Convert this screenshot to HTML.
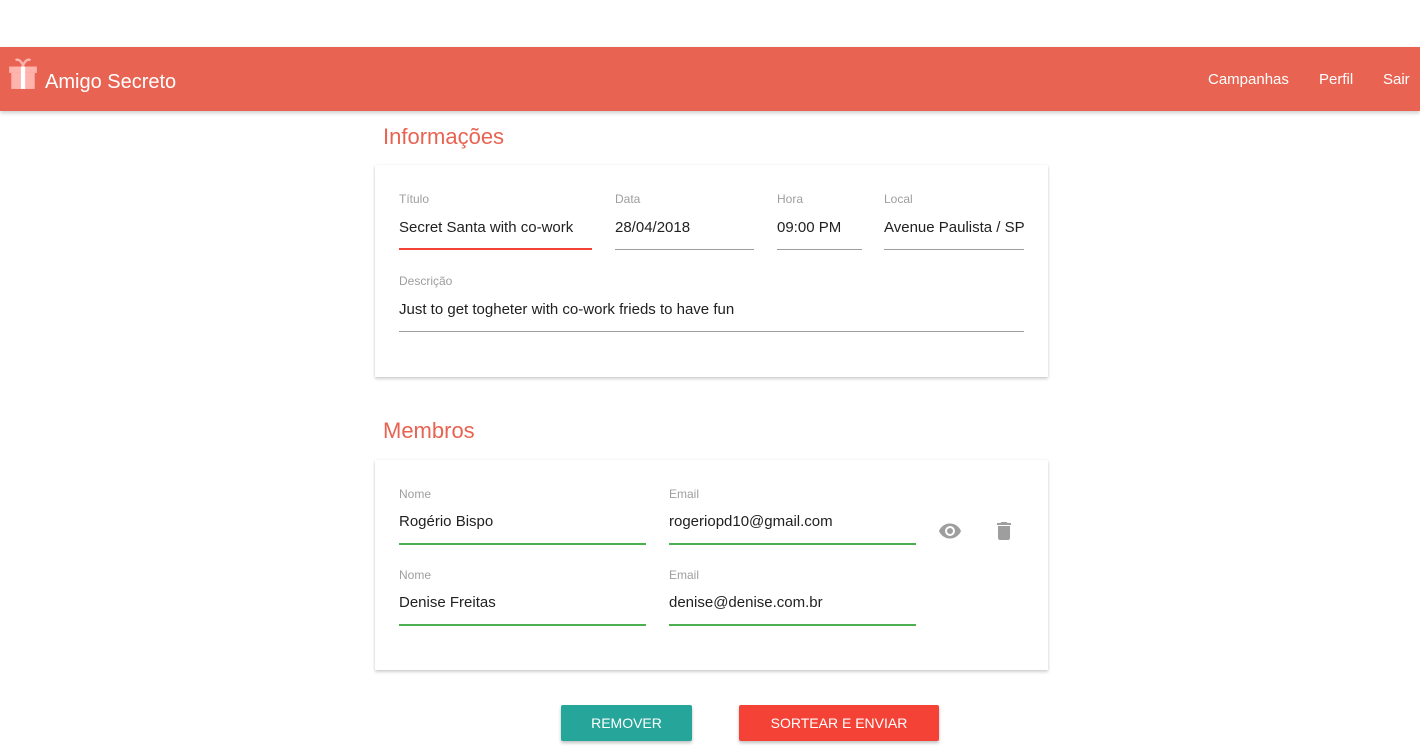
<!DOCTYPE html>
<html><head><meta charset="utf-8"><style>
*{margin:0;padding:0;box-sizing:border-box}
body{width:1420px;height:756px;background:#fff;font-family:"Liberation Sans",sans-serif;position:relative;overflow:hidden}
.a{position:absolute;white-space:nowrap}
.hdr{position:absolute;left:0;top:47px;width:1420px;height:64px;background:#e86351;box-shadow:0 2px 4px rgba(0,0,0,.2)}
.card{position:absolute;left:375px;width:673px;background:#fff;box-shadow:0 2px 3px rgba(0,0,0,.18),0 0 2px rgba(0,0,0,.08)}
.t{color:#e86351;font-size:22px}
.lb{font-size:12px;color:#9e9e9e}
.v{font-size:15px;color:#212121}
.ln{position:absolute;height:1px;background:#9e9e9e}
.btn{position:absolute;top:705px;height:36px;color:#fff;font-size:14px;text-align:center;line-height:36px;border-radius:2px;box-shadow:0 2px 3px rgba(0,0,0,.25)}
</style></head><body>
<div class="hdr">
<svg class="a" style="left:8px;top:11px" width="30" height="32" viewBox="0 0 28 30"><path d="M7 2c4-2 7 4 7 6M21 2c-4-2-7 4-7 6" stroke="#ffb3ad" stroke-width="2.2" fill="none"/><rect x="1" y="8" width="26" height="6" fill="#ffb3ad"/><rect x="3" y="14" width="22" height="15" fill="#ffb3ad"/><rect x="12" y="8" width="4" height="21" fill="#fff"/></svg>
<div class="a" style="left:45px;top:24px;font-size:20px;color:#fff">Amigo Secreto</div>
<div class="a" style="left:1208px;top:24px;font-size:15px;color:#fff">Campanhas</div>
<div class="a" style="left:1319px;top:24px;font-size:15px;color:#fff">Perfil</div>
<div class="a" style="left:1383px;top:24px;font-size:15px;color:#fff">Sair</div>
</div>
<div class="a t" style="left:383px;top:124px">Informações</div>
<div class="card" style="top:165px;height:212px"></div>
<div class="a lb" style="left:399px;top:192px">Título</div>
<div class="a v" style="left:399px;top:219px">Secret Santa with co-work</div>
<div class="ln" style="left:399px;top:248px;width:193px;height:2px;background:#f44336"></div>
<div class="a lb" style="left:615px;top:192px">Data</div>
<div class="a v" style="left:615px;top:219px">28/04/2018</div>
<div class="ln" style="left:615px;top:249px;width:139px"></div>
<div class="a lb" style="left:777px;top:192px">Hora</div>
<div class="a v" style="left:777px;top:219px">09:00 PM</div>
<div class="ln" style="left:777px;top:249px;width:85px"></div>
<div class="a lb" style="left:884px;top:192px">Local</div>
<div class="a v" style="left:884px;top:219px">Avenue Paulista / SP</div>
<div class="ln" style="left:884px;top:249px;width:140px"></div>
<div class="a lb" style="left:399px;top:274px">Descrição</div>
<div class="a v" style="left:399px;top:301px">Just to get togheter with co-work frieds to have fun</div>
<div class="ln" style="left:399px;top:331px;width:625px"></div>

<div class="a t" style="left:383px;top:418px">Membros</div>
<div class="card" style="top:460px;height:210px"></div>
<div class="a lb" style="left:399px;top:487px">Nome</div>
<div class="a v" style="left:399px;top:513px">Rogério Bispo</div>
<div class="ln" style="left:399px;top:543px;width:247px;height:2px;background:#4caf50"></div>
<div class="a lb" style="left:669px;top:487px">Email</div>
<div class="a v" style="left:669px;top:513px">rogeriopd10@gmail.com</div>
<div class="ln" style="left:669px;top:543px;width:247px;height:2px;background:#4caf50"></div>
<div class="a lb" style="left:399px;top:568px">Nome</div>
<div class="a v" style="left:399px;top:594px">Denise Freitas</div>
<div class="ln" style="left:399px;top:624px;width:247px;height:2px;background:#4caf50"></div>
<div class="a lb" style="left:669px;top:568px">Email</div>
<div class="a v" style="left:669px;top:594px">denise@denise.com.br</div>
<div class="ln" style="left:669px;top:624px;width:247px;height:2px;background:#4caf50"></div>
<svg class="a" style="left:938px;top:519px" width="24" height="24" viewBox="0 0 24 24"><path fill="#9e9e9e" d="M12 4.5C7 4.5 2.7 7.6 1 12c1.7 4.4 6 7.5 11 7.5s9.3-3.1 11-7.5c-1.7-4.4-6-7.5-11-7.5zM12 17a5 5 0 110-10 5 5 0 010 10zm0-8a3 3 0 100 6 3 3 0 000-6z"/></svg>
<svg class="a" style="left:992px;top:519px" width="24" height="24" viewBox="0 0 24 24"><path fill="#9e9e9e" d="M6 19c0 1.1.9 2 2 2h8c1.1 0 2-.9 2-2V7H6v12zM19 4h-3.5l-1-1h-5l-1 1H5v2h14V4z"/></svg>

<div class="btn" style="left:561px;width:131px;background:#26a69a">REMOVER</div>
<div class="btn" style="left:739px;width:200px;background:#f44336">SORTEAR E ENVIAR</div>
</body></html>
